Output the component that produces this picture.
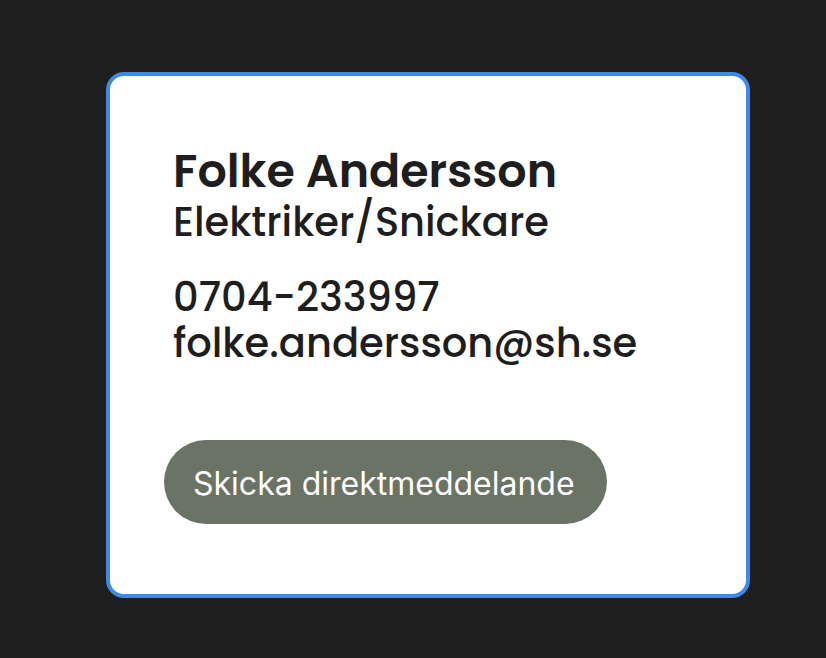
<main>
  <article class="card">
    <header>
      <h1>Folke Andersson</h1>
      <p class="role">Elektriker/Snickare</p>
    </header>
    <address>
      <a href="tel:0704233997">0704-233997</a>
      <a href="mailto:folke.andersson@sh.se">folke.andersson@sh.se</a>
    </address>
    <button type="button">Skicka direktmeddelande</button>
  </article>
</main>

<style>
  :global(body) {
    margin: 0;
    background: #1e1e1e;
  }

  main {
    box-sizing: border-box;
    min-height: 100vh;
    padding: 72px 76px 60px 106px;
    font-family: Poppins, Inter, "Liberation Sans", sans-serif;
    color: #1e1e1e;
  }

  .card {
    box-sizing: border-box;
    padding: 70px 54px;
    border: 4px solid #3f8ae8;
    border-radius: 18px;
    background: #fff;
  }

  header,
  address {
    margin: 0 9px;
  }

  h1,
  p {
    margin: 0;
  }

  h1 {
    font-size: 46px;
    font-weight: 600;
    line-height: 50px;
  }

  .role {
    font-size: 40px;
    font-weight: 500;
    line-height: 52px;
  }

  address {
    display: flex;
    flex-direction: column;
    align-items: flex-start;
    margin-top: 26px;
    font-size: 40px;
    font-style: normal;
    font-weight: 500;
    line-height: 46px;
  }

  a {
    color: inherit;
    text-decoration: none;
  }

  button {
    display: block;
    margin-top: 74px;
    padding: 24px 32px 20px 29px;
    border: 0;
    border-radius: 42px;
    background: #6a7366;
    color: #fff;
    font: 400 32px/40px Inter, "Liberation Sans", sans-serif;
  }
</style>
